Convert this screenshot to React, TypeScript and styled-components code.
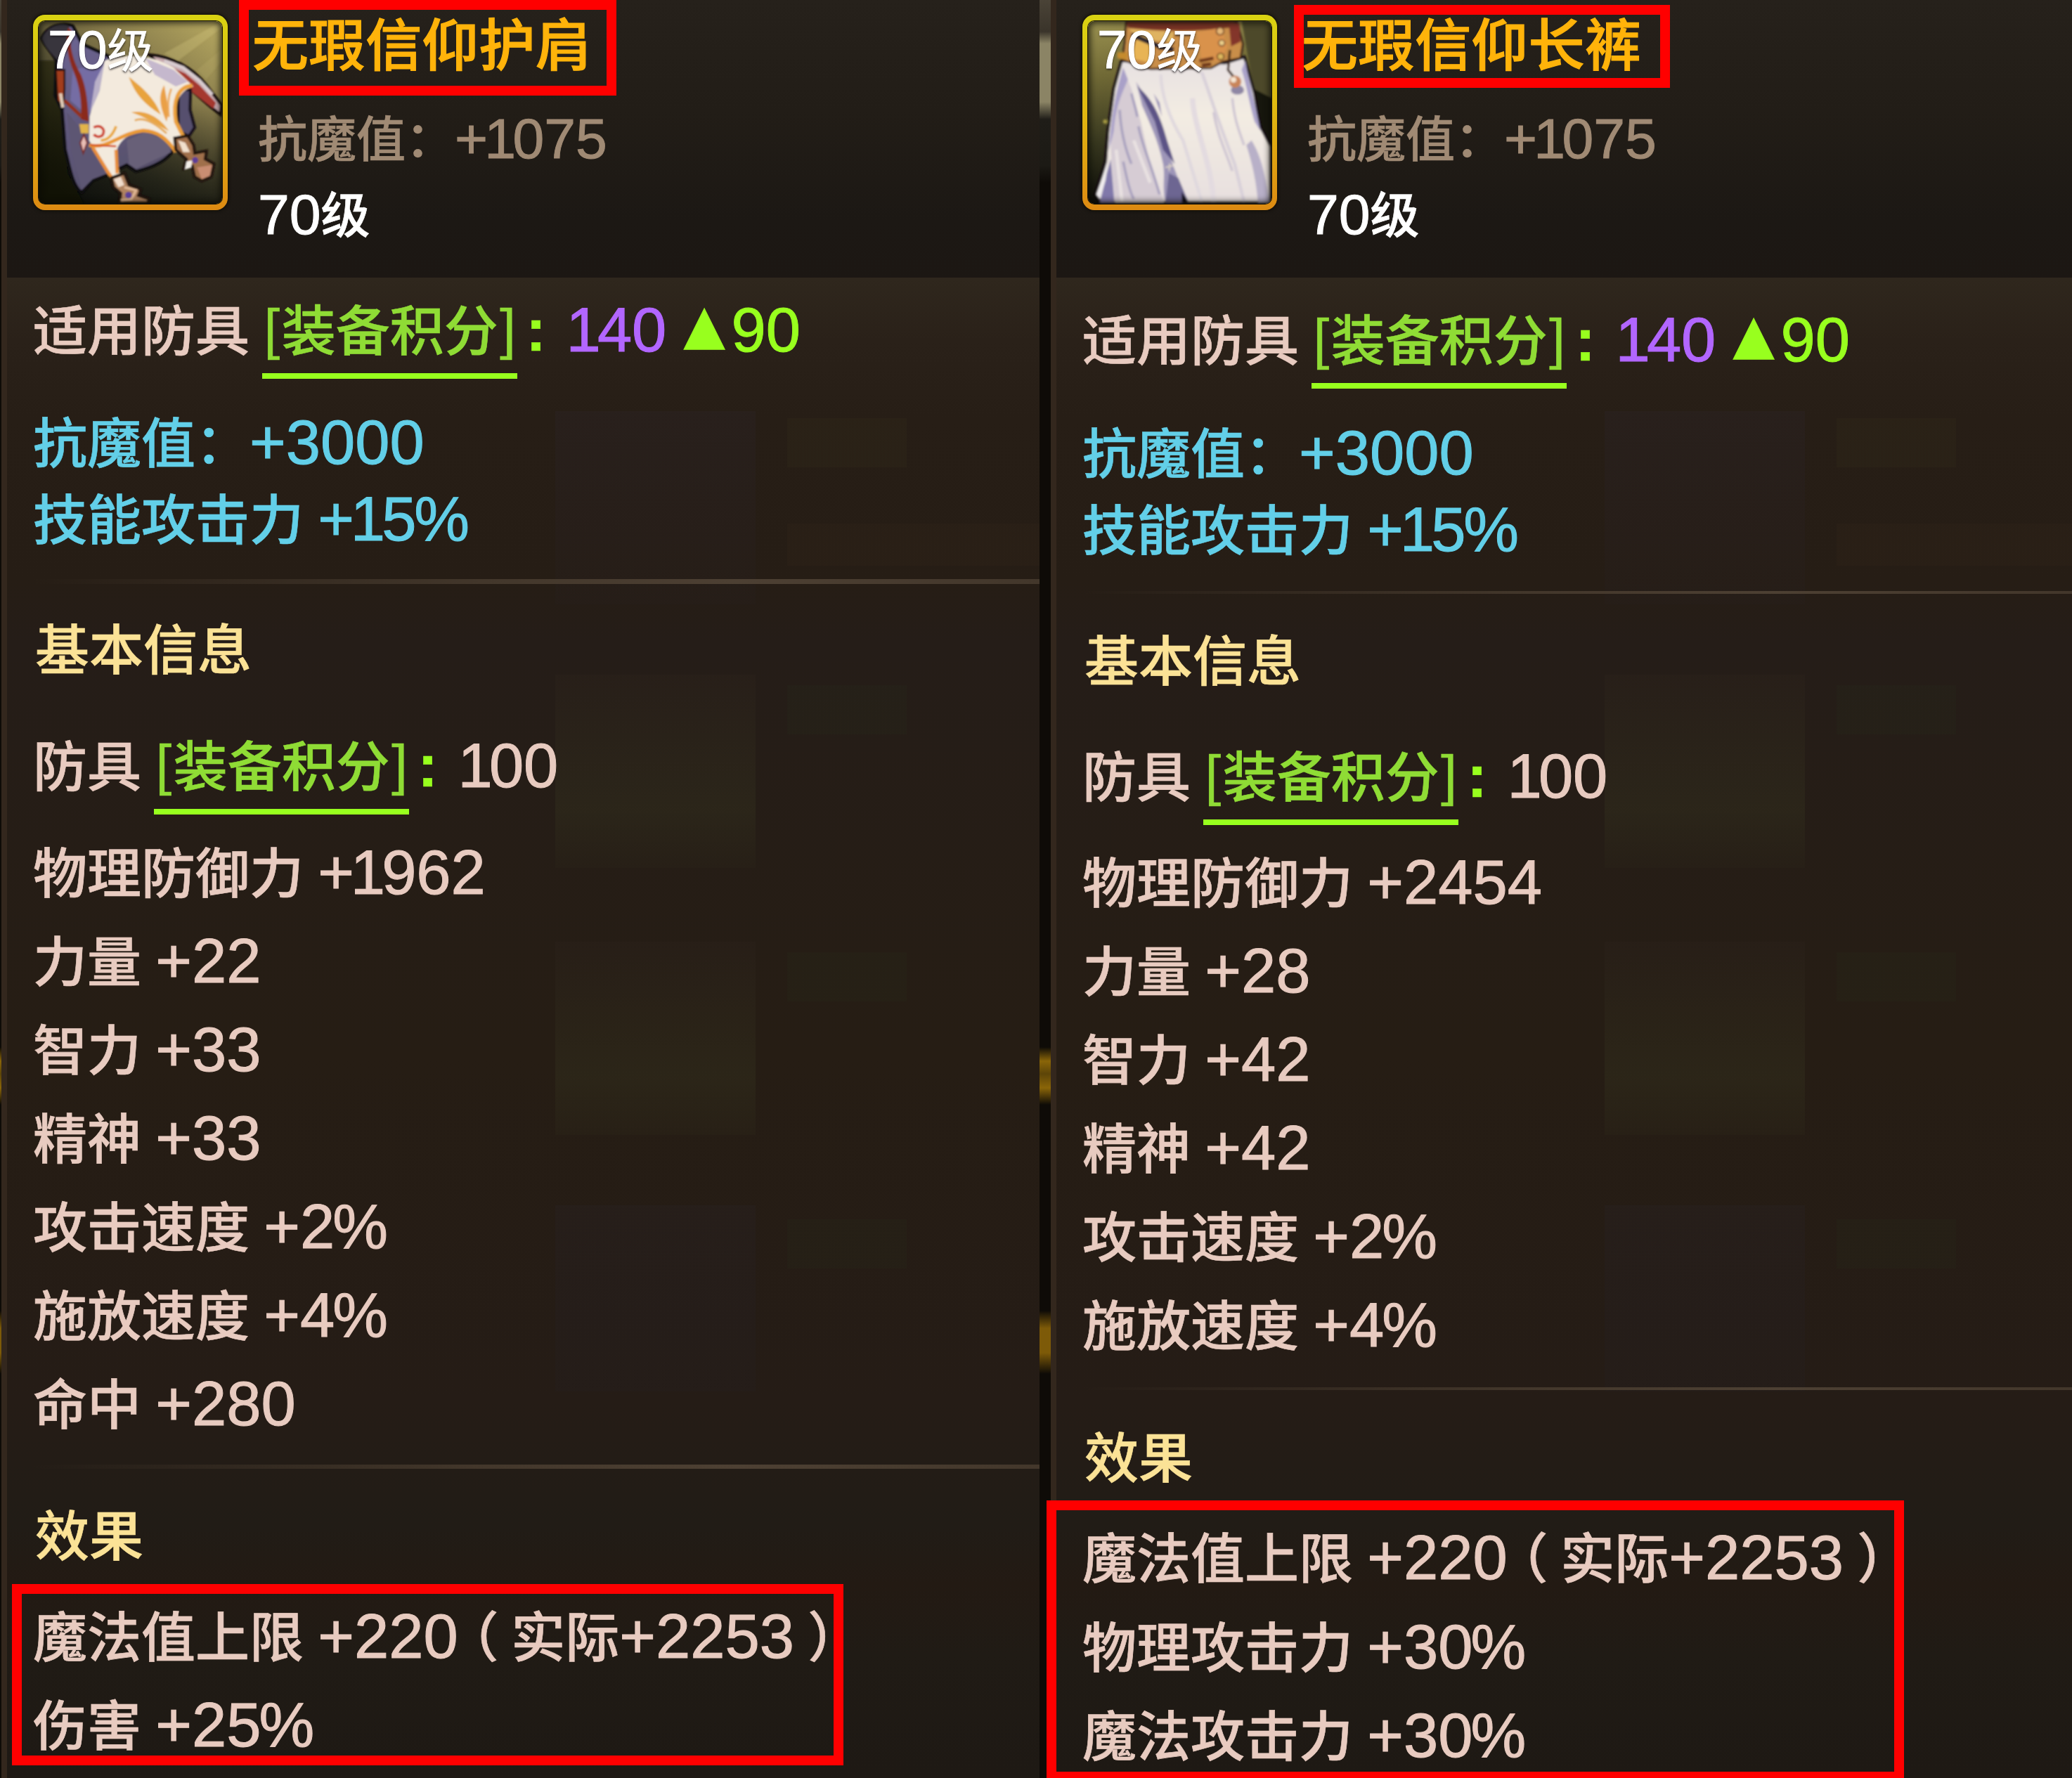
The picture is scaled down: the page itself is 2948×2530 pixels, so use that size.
import { FC, Fragment, ReactNode } from 'react'
import styled, { createGlobalStyle } from 'styled-components'

type Tone = 'label' | 'bonus' | 'heading' | 'muted' | 'plain' | 'title'

interface StatRow {
  text: string
  gap: number
}

interface Item {
  name: string
  art: ReactNode
  edge: number
  score: number
  scoreGap: number
  bonus: StatRow[]
  dividers: { before: number; size: number; after: number }[]
  armorGap: number
  stats: StatRow[]
  effects: StatRow[]
  titleMark: Box
  effectMark: Box
}

interface Box {
  x: number
  y: number
  w: number
  h: number
}

const tones: Record<Tone, string> = {
  label: '#e8cbc0',
  bonus: '#62cfe8',
  heading: '#fbe296',
  muted: '#a08a74',
  plain: '#ffffff',
  title: '#ffb30a'
}

// digits and signs are set larger than the hanzi around them
const Mixed: FC<{ children: string }> = ({ children }) => (
  <>
    {children.split(/([+\d%]+|[（）])/).map((part, index) => {
      if (part === '（') return <OpenParen key={index}>{part}</OpenParen>
      if (part === '）') return <CloseParen key={index}>{part}</CloseParen>
      if (!/^[+\d%]/.test(part)) return <Fragment key={index}>{part}</Fragment>
      return (
        <Num key={index}>
          {part.split(/([1%])/).map((piece, i) => {
            if (piece === '1') return <One key={i}>1</One>
            if (piece === '%') return <Percent key={i}>%</Percent>
            return piece
          })}
        </Num>
      )
    })}
  </>
)

const ShoulderArt: FC = () => (
  <svg viewBox='105 92 782 778' preserveAspectRatio='none'>
    <defs>
      <linearGradient id='shoulderBg' x1='1' y1='0' x2='0.2' y2='1'>
        <stop offset='0' stopColor='#b9ab62' />
        <stop offset='0.35' stopColor='#85794a' />
        <stop offset='0.7' stopColor='#3f3d29' />
        <stop offset='1' stopColor='#121310' />
      </linearGradient>
      <linearGradient id='lining' x1='0' y1='0' x2='0.4' y2='1'>
        <stop offset='0' stopColor='#6f6797' />
        <stop offset='1' stopColor='#57506b' />
      </linearGradient>
      <linearGradient id='lowShade' x1='0' y1='0' x2='0' y2='1'>
        <stop offset='0.45' stopColor='#0d0f0b' stopOpacity='0' />
        <stop offset='1' stopColor='#0d0f0b' stopOpacity='0.7' />
      </linearGradient>
      <filter id='softA'>
        <feGaussianBlur stdDeviation='3.5' />
      </filter>
    </defs>
    <rect x='105' y='92' width='782' height='778' fill='url(#shoulderBg)' />
    <rect x='105' y='92' width='782' height='778' fill='url(#lowShade)' />
    <g filter='url(#softA)'>
      <path d='M640 230L887 92L887 120L700 260Z' fill='#d6c982' opacity='.3' />
      <path d='M780 300L887 210L887 260L820 340Z' fill='#cabb72' opacity='.2' />
      <path d='M105 260L190 260L215 560L230 740L300 870L105 870Z' fill='#0d0f0b' opacity='.55' />
      <path
        d='M118 165C140 115 200 95 250 112L290 190L400 240L470 330L660 560L680 640C650 690 590 715 520 732L480 705L400 745L335 770L288 822C245 790 235 700 218 640L205 470L175 410L180 260C160 220 130 200 118 165Z'
        fill='url(#lining)'
        stroke='#0d0a10'
        strokeWidth='13'
      />
      <path d='M118 165C140 115 200 95 235 112L235 200L195 270C160 230 130 200 118 165Z' fill='#39343c' />
      <path d='M250 300L380 270L320 500L240 430Z' fill='#746da4' />
      <path d='M225 480L300 570L400 740L335 765L290 810L245 650Z' fill='#5d5673' />
      <path d='M480 600L560 565L650 600L670 650L520 720L490 700Z' fill='#686078' />
      <path
        d='M575 235C680 245 760 290 820 365L885 450L880 490L835 455L760 390L690 350Z'
        fill='#c7a9ae'
        stroke='#160c0d'
        strokeWidth='12'
      />
      <path d='M650 280L730 315L790 365L860 440L850 465L760 395L690 350Z' fill='#a5372f' />
      <path d='M640 262L720 290L790 345L845 405' stroke='#d8ccd0' strokeWidth='14' fill='none' />
      <path
        d='M700 380L752 385L750 470L770 545L745 582L700 560Z'
        fill='#56506e'
        stroke='#14101a'
        strokeWidth='12'
      />
      <path
        d='M385 262C470 225 590 235 680 290L765 370C700 390 680 450 690 520L720 590L755 640L735 670L690 650C650 590 600 560 550 560C480 570 440 610 435 660L450 740L485 780L440 800L405 745L355 660L320 600L322 500Z'
        fill='#f3eadd'
      />
      <path d='M385 270L365 390L325 480L345 350Z' fill='#b9b0c8' />
      <path d='M560 250L680 300L740 350L690 370L600 320Z' fill='#c5b8cd' />
      <path d='M320 620C400 640 450 570 550 558C610 560 650 590 690 650' stroke='#ea9a35' strokeWidth='15' fill='none' />
      <path d='M760 366C700 370 675 430 690 520L730 600' stroke='#eba03c' strokeWidth='16' fill='none' />
      <path d='M335 630L400 735L420 765M435 640L440 740' stroke='#e98e3a' strokeWidth='14' fill='none' />
      <path d='M325 620L435 625' stroke='#d7542c' strokeWidth='8' fill='none' />
      <path d='M490 330C540 370 600 420 625 490C580 460 520 420 490 330Z' fill='#e8a33c' />
      <path d='M640 365C615 410 620 450 650 520C665 470 650 430 640 365Z' fill='#eaa047' />
      <path d='M670 380C655 420 655 450 660 500' stroke='#eca95a' strokeWidth='8' fill='none' />
      <path d='M500 480C560 470 620 500 660 560C600 530 560 500 500 480Z' fill='#e9a545' />
      <path d='M515 515C550 500 600 525 650 570' stroke='#e6ac5c' strokeWidth='9' fill='none' />
      <path d='M340 545C370 530 395 555 375 580C360 590 345 580 340 575' stroke='#cd3f2c' strokeWidth='11' fill='none' />
      <path d='M435 540C420 580 400 600 370 600' stroke='#e9a840' strokeWidth='11' fill='none' />
      <path d='M245 130C235 180 240 240 285 320C310 380 315 450 318 520L285 510C290 430 280 370 255 310C225 240 220 170 230 120Z' fill='#8a2b1f' />
      <path d='M178 300L215 300L215 380L210 460L185 430Z' fill='#a33d1c' stroke='#1b0e0d' strokeWidth='7' />
      <path d='M215 430L290 500' stroke='#92301f' strokeWidth='15' />
      <path d='M198 400L208 460' stroke='#e2cdb8' strokeWidth='14' />
      <path d='M278 530L318 530L318 570L285 570Z' fill='#e2b44a' />
      <path d='M298 575L312 610L295 655L282 610Z' fill='#e8bdb5' stroke='#752b2b' strokeWidth='6' />
      <path
        d='M415 760L470 740L490 790L540 810L530 835L575 850L570 866L450 866L455 825L425 800Z'
        fill='#b08360'
        stroke='#20120f'
        strokeWidth='12'
      />
      <path d='M425 765L455 755L470 790L445 800Z' fill='#f0dccb' />
      <path d='M470 800L520 812L500 850L455 855' stroke='#e0b795' strokeWidth='10' fill='none' />
      <circle cx='488' cy='833' r='14' fill='#5b3f9a' />
      <path
        d='M685 590L740 580L765 620L770 655L820 645L815 680L852 700L840 755L800 772L770 755L760 710L725 720L735 680L690 640Z'
        fill='#a0704c'
        stroke='#20120f'
        strokeWidth='12'
      />
      <path d='M700 600L730 610L750 650L720 650Z' fill='#f1e0cd' />
      <path d='M780 715L845 705L835 750L800 765Z' fill='#c98d72' />
      <path d='M735 690L760 685L755 715L728 725Z' fill='#f4f0ea' />
      <circle cx='772' cy='684' r='13' fill='#5d3e97' />
    </g>
  </svg>
)

const TrouserArt: FC = () => (
  <svg viewBox='115 92 782 778' preserveAspectRatio='none'>
    <defs>
      <linearGradient id='trouserBg' x1='0.1' y1='0' x2='0.2' y2='1'>
        <stop offset='0' stopColor='#9a9150' />
        <stop offset='0.3' stopColor='#6f6835' />
        <stop offset='0.65' stopColor='#38381f' />
        <stop offset='1' stopColor='#090a07' />
      </linearGradient>
      <linearGradient id='cloth' x1='0' y1='0' x2='0' y2='1'>
        <stop offset='0' stopColor='#e6e0e2' />
        <stop offset='0.4' stopColor='#f3ece2' />
        <stop offset='1' stopColor='#e7dfdf' />
      </linearGradient>
      <filter id='softB'>
        <feGaussianBlur stdDeviation='4.5' />
      </filter>
    </defs>
    <rect x='115' y='92' width='782' height='778' fill='url(#trouserBg)' />
    <g filter='url(#softB)'>
      <path d='M770 92L900 92L900 640L850 540Z' fill='#4d4929' />
      <path d='M820 380L900 420L900 660L845 520Z' fill='#14130e' />
      <path
        d='M258 260L225 380L200 560L190 690L148 830L170 866L895 866L895 625L850 540L825 400L782 245L700 270Z'
        fill='url(#cloth)'
        stroke='#120d12'
        strokeWidth='12'
      />
      <path d='M262 290C240 400 220 500 212 640L230 866L440 866L380 700L340 520L300 380Z' fill='#d6ccd4' />
      <path d='M265 290C235 390 215 480 205 640L225 560C235 440 262 400 285 340Z' fill='#a9a0c8' />
      <path d='M212 680L228 866L165 866L195 740Z' fill='#8078aa' />
      <path d='M150 830L200 690L190 770L165 850Z' fill='#f1eeef' />
      <path d='M320 350C350 400 385 450 425 560C445 620 475 700 540 866L445 866C430 790 445 760 435 700C415 600 375 520 345 450Z' fill='#9d95b8' />
      <path d='M325 370C400 430 430 520 455 610L485 700L435 640L400 520Z' fill='#5b5386' />
      <path d='M395 400L430 500L420 440Z' fill='#8f87b4' />
      <path d='M460 740L500 760L545 866L445 866Z' fill='#6d6692' />
      <path d='M515 820L545 866L515 866Z' fill='#100c14' />
      <path d='M250 470C255 560 275 640 300 700M265 690C280 760 290 810 310 850M330 540C345 620 380 690 420 830M300 400C310 440 320 470 325 500' stroke='#a69fbd' strokeWidth='10' fill='none' />
      <path d='M235 640L260 860M310 600L380 780' stroke='#e9e2e2' strokeWidth='14' fill='none' />
      <path d='M425 320C430 420 470 520 520 600L600 860' stroke='#dfd8de' strokeWidth='13' fill='none' />
      <path d='M560 420C570 560 640 690 650 860' stroke='#e3dbe0' strokeWidth='22' fill='none' />
      <path d='M600 310C640 420 670 520 740 700L780 860' stroke='#d8d0d9' strokeWidth='13' fill='none' />
      <path d='M650 480C670 590 700 640 730 730M730 420C740 520 760 560 780 620' stroke='#cdc4d2' strokeWidth='10' fill='none' />
      <path d='M785 260C800 350 830 450 850 560L825 520C800 430 790 360 770 300Z' fill='#a9a1c9' />
      <path d='M812 600C850 660 870 740 890 866L840 866C830 760 815 700 790 620Z' fill='#b8b0c8' />
      <path
        d='M278 96L750 96L775 190L765 250L690 265L640 292L380 296L262 258L272 180Z'
        fill='#c98e48'
        stroke='#2a1612'
        strokeWidth='8'
      />
      <path d='M280 96L740 96L720 120C560 140 420 135 285 120Z' fill='#7b3527' />
      <path d='M290 125L480 140L475 180L330 170Z' fill='#dfb361' />
      <path d='M320 170L400 180L385 270L300 250Z' fill='#e8b455' />
      <path d='M300 150L420 200L480 215' stroke='#2c2633' strokeWidth='20' fill='none' />
      <path d='M580 140L680 120L710 200L680 260L600 262Z' fill='#d9924c' />
      <path d='M715 100L760 100L765 180L725 200Z' fill='#83352b' />
      <path d='M590 262L650 250M600 280L640 275' stroke='#6b3219' strokeWidth='14' />
      <circle cx='678' cy='135' r='16' fill='#e7b877' stroke='#6b3d1f' strokeWidth='5' />
      <circle cx='685' cy='185' r='13' fill='#edd08b' stroke='#6b3d1f' strokeWidth='5' />
      <circle cx='680' cy='243' r='14' fill='#dfb95e' stroke='#5a3016' strokeWidth='5' />
      <path d='M240 225L285 225L280 258L240 250Z' fill='#c58b2d' />
      <path d='M720 215L712 300L740 335' stroke='#3b2417' strokeWidth='10' fill='none' />
      <ellipse cx='752' cy='385' rx='28' ry='20' fill='#8e86a4' />
      <circle cx='742' cy='350' r='26' fill='#c98458' />
      <circle cx='735' cy='342' r='12' fill='#f5e6d2' />
      <path d='M445 715L480 707M463 698L461 730' stroke='#d8cfc4' strokeWidth='6' />
      <circle cx='188' cy='520' r='9' fill='#a99c43' />
    </g>
  </svg>
)

const Score: FC = () => <Tag>[装备积分]</Tag>

const ItemPanel: FC<{ item: Item }> = ({ item }) => (
  <Panel>
    <Strip $width={item.edge} />
    <Card>
      <Header>
        <Frame>
          <Art>{item.art}</Art>
          <FrameLevel>
            <Mixed>70级</Mixed>
          </FrameLevel>
        </Frame>
        <Summary>
          <Name>{item.name}</Name>
          <SmallLine $tone='muted' $gap={46}>
            <Mixed>抗魔值：+1075</Mixed>
          </SmallLine>
          <SmallLine $tone='plain' $gap={28}>
            <Mixed>70级</Mixed>
          </SmallLine>
        </Summary>
      </Header>
      <Body>
        <Line $gap={item.scoreGap}>
          适用防具 <Score />
          <Colon>:</Colon>
          <Violet>
            <Mixed>{String(item.score)}</Mixed>
          </Violet>
          <Up>▲</Up>
          <Lime>
            <Mixed>90</Mixed>
          </Lime>
        </Line>
        {item.bonus.map(row => (
          <Line key={row.text} $gap={row.gap} $tone='bonus'>
            <Mixed>{row.text}</Mixed>
          </Line>
        ))}
        <Divider $size={item.dividers[0].size} $before={item.dividers[0].before} />
        <Line $gap={item.dividers[0].after} $tone='heading'>
          基本信息
        </Line>
        <Line $gap={item.armorGap}>
          防具 <Score />
          <Colon>:</Colon>
          <Mixed>100</Mixed>
        </Line>
        {item.stats.map(row => (
          <Line key={row.text} $gap={row.gap}>
            <Mixed>{row.text}</Mixed>
          </Line>
        ))}
        <Divider $size={item.dividers[1].size} $before={item.dividers[1].before} />
        <Line $gap={item.dividers[1].after} $tone='heading'>
          效果
        </Line>
        {item.effects.map(row => (
          <Line key={row.text} $gap={row.gap}>
            <Mixed>{row.text}</Mixed>
          </Line>
        ))}
      </Body>
    </Card>
    <Mark $box={item.titleMark} />
    <Mark $box={item.effectMark} />
  </Panel>
)

const items: Item[] = [
  {
    name: '无瑕信仰护肩',
    art: <ShoulderArt />,
    edge: 2,
    score: 140,
    scoreGap: 26,
    bonus: [
      { text: '抗魔值：+3000', gap: 60 },
      { text: '技能攻击力 +15%', gap: 9 }
    ],
    dividers: [
      { before: 34, size: 7, after: 44 },
      { before: 35, size: 6, after: 46 }
    ],
    armorGap: 66,
    stats: [
      { text: '物理防御力 +1962', gap: 52 },
      { text: '力量 +22', gap: 26 },
      { text: '智力 +33', gap: 26 },
      { text: '精神 +33', gap: 26 },
      { text: '攻击速度 +2%', gap: 26 },
      { text: '施放速度 +4%', gap: 26 },
      { text: '命中 +280', gap: 26 }
    ],
    effects: [
      { text: '魔法值上限 +220（实际+2253）', gap: 44 },
      { text: '伤害 +25%', gap: 26 }
    ],
    titleMark: { x: 340, y: 0, w: 537, h: 136 },
    effectMark: { x: 17, y: 2254, w: 1183, h: 258 }
  },
  {
    name: '无瑕信仰长裤',
    art: <TrouserArt />,
    edge: 16,
    score: 140,
    scoreGap: 40,
    bonus: [
      { text: '抗魔值：+3000', gap: 61 },
      { text: '技能攻击力 +15%', gap: 9 }
    ],
    dividers: [
      { before: 36, size: 4, after: 46 },
      { before: 37, size: 4, after: 47 }
    ],
    armorGap: 65,
    stats: [
      { text: '物理防御力 +2454', gap: 51 },
      { text: '力量 +28', gap: 26 },
      { text: '智力 +42', gap: 26 },
      { text: '精神 +42', gap: 26 },
      { text: '攻击速度 +2%', gap: 26 },
      { text: '施放速度 +4%', gap: 26 }
    ],
    effects: [
      { text: '魔法值上限 +220（实际+2253）', gap: 43 },
      { text: '物理攻击力 +30%', gap: 27 },
      { text: '魔法攻击力 +30%', gap: 26 }
    ],
    titleMark: { x: 362, y: 7, w: 535, h: 118 },
    effectMark: { x: 10, y: 2135, w: 1220, h: 400 }
  }
]

const App: FC = () => (
  <>
    <GlobalStyle />
    <Board>
      {items.map(item => (
        <ItemPanel key={item.name} item={item} />
      ))}
    </Board>
  </>
)

export default App

const GlobalStyle = createGlobalStyle`
  * {
    box-sizing: border-box;
  }
  body {
    margin: 0;
    background-color: #241c16;
    overflow: hidden;
  }
`

const Board = styled.main`
  display: grid;
  grid-template-columns: 1479px 1469px;
  width: 2948px;
  height: 2530px;
  overflow: hidden;
  font-family: 'Noto Sans CJK SC', sans-serif;
  font-size: 77px;
  font-weight: 500;
  -webkit-text-stroke: 0.6px currentColor;
`

const Panel = styled.section`
  position: relative;
  display: flex;
  height: 2530px;
  overflow: hidden;
`

const Strip = styled.div<{ $width: number }>`
  flex: none;
  width: ${props => props.$width}px;
  background: linear-gradient(
    to bottom,
    #4a4337 0,
    #3a342a 45px,
    #8b8465 62px,
    #8b8465 145px,
    #1f1d18 170px,
    #1c1a15 235px,
    #0e0b07 260px,
    #0e0b07 1490px,
    #8a6508 1510px,
    #5d4508 1528px,
    #8a6508 1548px,
    #0e0b07 1572px,
    #0e0b07 1865px,
    #7d5a08 1890px,
    #7d5a08 1925px,
    #0e0b07 1955px,
    #0e0b07 100%
  );
`

const Card = styled.div`
  flex: 1;
  min-width: 0;
  border-left: 8px solid #33271d;
`

const Header = styled.header`
  display: flex;
  align-items: flex-start;
  height: 395px;
  padding: 21px 0 0 37px;
  background: linear-gradient(to bottom, #26211b 0, #221d17 40%, #1c1814 80%, #1c1713 100%);
`

const Frame = styled.div`
  position: relative;
  flex: none;
  width: 277px;
  height: 278px;
  padding: 9px 8px;
  border-radius: 17px;
  background: linear-gradient(to bottom, #d9d212 0, #e0bb10 45%, #dd8a12 100%);
  box-shadow: 0 0 4px 1px #0f0d06;
`

const Art = styled.div`
  position: relative;
  width: 100%;
  height: 100%;
  overflow: hidden;
  border-radius: 9px;
  box-shadow: 0 0 0 1px #17140a;

  svg {
    display: block;
    width: 100%;
    height: 100%;
  }

  &::after {
    content: '';
    position: absolute;
    inset: 0;
    border-radius: 9px;
    box-shadow: inset 0 0 10px 3px rgba(10, 9, 4, 0.75);
  }
`

const FrameLevel = styled.span`
  position: absolute;
  top: 1px;
  left: 21px;
  font-size: 66px;
  font-weight: 400;
  line-height: 90px;
  color: #ffffff;
  white-space: nowrap;
  text-shadow: 0 2px 3px rgba(20, 16, 20, 0.8);
`

const Summary = styled.div`
  padding-left: 35px;
`

const Name = styled.h1`
  margin: -13px 0 0;
  font-size: 80px;
  font-weight: 500;
  line-height: 100px;
  letter-spacing: 0.6px;
  color: ${tones.title};
  -webkit-text-stroke: 1.2px currentColor;
`

const SmallLine = styled.p<{ $tone: Tone; $gap: number }>`
  margin: ${props => props.$gap}px 0 0 8px;
  font-size: 70px;
  line-height: 80px;
  color: ${props => tones[props.$tone]};
  white-space: nowrap;
`

const Body = styled.div`
  display: flex;
  flex-direction: column;
  height: 2135px;
  padding-left: 37px;
  background:
    linear-gradient(rgba(70, 66, 30, 0.1), rgba(70, 66, 30, 0.1)) 1110px 200px / 170px 70px no-repeat,
    linear-gradient(rgba(40, 60, 30, 0.1), rgba(40, 60, 30, 0.1)) 1110px 580px / 170px 70px no-repeat,
    linear-gradient(rgba(40, 60, 30, 0.1), rgba(40, 60, 30, 0.1)) 1110px 960px / 170px 70px no-repeat,
    linear-gradient(rgba(40, 60, 30, 0.1), rgba(40, 60, 30, 0.1)) 1110px 1340px / 170px 70px no-repeat,
    linear-gradient(rgba(70, 50, 30, 0.1), rgba(70, 50, 30, 0.1)) 1110px 350px / 370px 60px no-repeat,
    linear-gradient(rgba(44, 36, 42, 0.3), rgba(40, 33, 36, 0.15)) 780px 190px / 285px 275px no-repeat,
    linear-gradient(rgba(46, 36, 28, 0.3), rgba(52, 50, 30, 0.4) 70%, rgba(52, 50, 30, 0.1)) 780px 565px / 285px
      275px no-repeat,
    linear-gradient(rgba(44, 34, 28, 0.3), rgba(52, 50, 30, 0.4) 70%, rgba(52, 50, 30, 0.15)) 780px 945px / 285px
      275px no-repeat,
    linear-gradient(rgba(40, 34, 38, 0.3), rgba(36, 32, 36, 0.2)) 780px 1320px / 285px 265px no-repeat,
    linear-gradient(
      to bottom,
      #2f271d 0,
      #2a2119 90px,
      #271e16 200px,
      #261d15 430px,
      #251d18 520px,
      #261d14 1100px,
      #251c16 1600px,
      #211c16 1780px,
      #231a13 1860px,
      #201b15 1960px,
      #1e1914 100%
    );
`

const Line = styled.div<{ $gap: number; $tone?: Tone }>`
  flex: none;
  height: 100px;
  margin-top: ${props => props.$gap}px;
  padding-left: ${props => (props.$tone === 'heading' ? 3 : 0)}px;
  line-height: 90px;
  word-spacing: 3px;
  white-space: nowrap;
  color: ${props => tones[props.$tone || 'label']};
`

const Divider = styled.div<{ $size: number; $before: number }>`
  flex: none;
  height: ${props => props.$size}px;
  margin-top: ${props => props.$before}px;
  background: linear-gradient(to right, transparent 0, #43372b 45%, #4d4033 70%, #43372b 100%);
`

const Num = styled.span`
  font-family: 'Liberation Sans', sans-serif;
  font-size: 1.15em;
  font-weight: 400;
  line-height: 0;
  vertical-align: -1px;
  -webkit-text-stroke: 1px currentColor;
`

// the figure one sits tighter than the other digits
const One = styled.span`
  margin: 0 -0.055em 0 -0.06em;
`

const Percent = styled.span`
  margin-left: -0.035em;
`

const OpenParen = styled.span`
  margin: 0 0.23em 0 0.25em;
  font-feature-settings: 'halt';
`

const CloseParen = styled.span`
  margin: 0 0.25em 0 0.25em;
  font-feature-settings: 'halt';
`

const Tag = styled.span`
  position: relative;
  margin-left: -2px;
  color: #8fdc35;

  &::after {
    content: '';
    position: absolute;
    left: 0;
    right: 0;
    bottom: -18px;
    height: 8px;
    background-color: #98ff1e;
  }
`

const Colon = styled.span`
  margin: 0 34px 0 12px;
  font-family: 'Liberation Sans', sans-serif;
  font-size: 86px;
  font-weight: 700;
  line-height: 0;
  color: #98ff1e;
`

const Violet = styled.span`
  color: #b266ff;
`

const Lime = styled.span`
  color: #98ff1e;
`

const Up = styled.span`
  margin: 0 9px 0 24px;
  font-family: 'DejaVu Sans', sans-serif;
  font-size: 77px;
  line-height: 0;
  vertical-align: 11px;
  color: #98ff1e;
`

const Mark = styled.div<{ $box: Box }>`
  position: absolute;
  left: ${props => props.$box.x}px;
  top: ${props => props.$box.y}px;
  width: ${props => props.$box.w}px;
  height: ${props => props.$box.h}px;
  border: 14px solid #ff0000;
`
